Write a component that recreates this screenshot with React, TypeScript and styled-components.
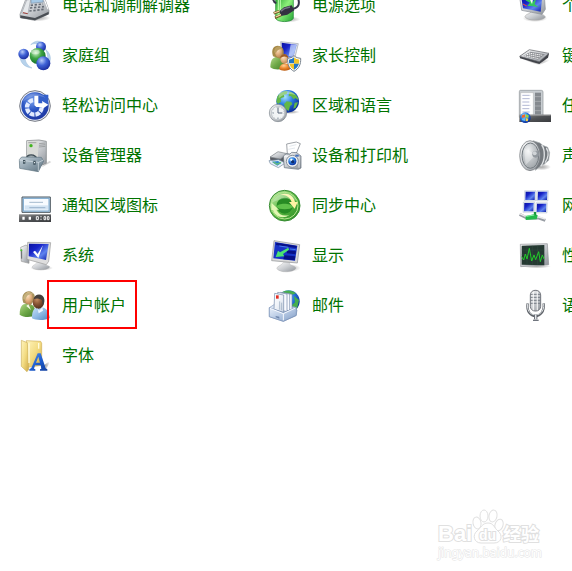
import React from "react";
import styled, { createGlobalStyle } from "styled-components";

const GlobalStyle = createGlobalStyle`
  * { box-sizing: border-box; }
  body {
    margin: 0;
    background: #fff;
    font-family: "Noto Sans CJK SC", "Noto Sans", sans-serif;
  }
`;

const Page = styled.main`
  display: flex;
  flex-direction: column;
  justify-content: space-between;
  min-height: 100vh;
  overflow: hidden;
`;

/* The list is scrolled part of a row past the top edge. */
const ItemGrid = styled.nav`
  display: grid;
  grid-template-columns: repeat(3, 250px);
  grid-auto-rows: 50px;
  margin-top: -19px;
`;

const Item = styled.a`
  display: flex;
  align-items: center;
  gap: 11px;
  padding-left: 19px;
  color: #007300;
  font-size: 16px;
  line-height: 24px;
  text-decoration: none;
  white-space: nowrap;
`;

const Icon = styled.svg`
  flex: none;
  width: 32px;
  height: 32px;
  overflow: visible;
`;

const Label = styled.span<{ $marked?: boolean }>`
  position: relative;
  padding-bottom: 4px;
  ${(p) =>
    p.$marked &&
    `&::after {
      content: "";
      position: absolute;
      inset: -12px -11px -9px -15px;
      border: 2px solid #ff0000;
    }`}
`;

const Watermark = styled.footer`
  display: flex;
  flex-direction: column;
  align-self: flex-end;
  width: 106px;
  margin: 0 30px 10px 0;
`;

const WatermarkLogo = styled.svg`
  display: block;
  width: 106px;
  height: 36px;
`;

const WatermarkAddress = styled.span`
  padding-left: 2px;
  color: #fff;
  font-family: "Noto Sans", sans-serif;
  font-size: 12px;
  line-height: 16px;
  -webkit-text-stroke: 1px #e4e4e4;
  paint-order: stroke fill;
`;

const Gradients = styled.svg`
  position: absolute;
  width: 0;
  height: 0;
`;

const ramps: Record<string, string[]> = {
  screen: ["#0a12a0", "#1723c8", "#5f84ee", "#0b18a8"],
  silver: ["#fafafa", "#c9ccd0", "#8d9298"],
  steel: ["#c5d2da", "#8fa1ad", "#5d717e"],
  dark: ["#8a8a8a", "#515356", "#393b3e"],
  green: ["#d5f5bb", "#58b63f", "#288a25"],
  battery: ["#1f9a2c", "#8df07a", "#22a334"],
  gold: ["#fff4bd", "#f3dc83", "#cfa945"],
  shirtGreen: ["#b5d98a", "#6fa948", "#3f7a2a"],
  shirtBlue: ["#c8e0f6", "#8db8e4", "#4d81bd"],
  paper: ["#ffffff", "#eef2f8", "#cfd8e6"],
  tray: ["#eaf1fb", "#b5c8e3", "#7f9bc4"],
  letter: ["#5a9bf0", "#1f5fd0", "#123f9e"],
};

const balls: Record<string, string[]> = {
  ballBlue: ["#b9cdfa", "#3f62d6", "#1c2fa0"],
  ballGreen: ["#d3f5cc", "#3ea444", "#14702a"],
  globe: ["#a6e4ff", "#2a7ce0", "#0b2f9c"],
  disc: ["#7aa2ee", "#2c56c4", "#1f3aa5"],
  skinLight: ["#fbe3c4", "#e8b98a", "#c08a58"],
  skinDark: ["#c48d62", "#8a5737", "#55301c"],
  orange: ["#ffd29a", "#ee8c33", "#bd5c10"],
  cone: ["#f4f5f6", "#c6cacd", "#a5aaae"],
  shade: ["rgba(60,60,60,.45)", "rgba(60,60,60,.25)", "rgba(60,60,60,0)"],
};

function Definitions() {
  const stops = (colors: string[]) =>
    colors.map((c, i) => (
      <stop key={i} offset={i / (colors.length - 1)} stopColor={c} />
    ));
  return (
    <Gradients aria-hidden="true">
      <defs>
        {Object.entries(ramps).map(([id, c]) => (
          <linearGradient key={id} id={id} x1="0" y1="0" x2="1" y2="1">
            {stops(c)}
          </linearGradient>
        ))}
        {Object.entries(balls).map(([id, c]) => (
          <radialGradient key={id} id={id} cx={id === "shade" ? ".5" : ".38"} cy={id === "shade" ? ".5" : ".3"} r={id === "shade" ? ".5" : ".7"}>
            {stops(c)}
          </radialGradient>
        ))}
      </defs>
    </Gradients>
  );
}

const phone = (
  <>
    <ellipse cx="56" cy="84" rx="38" ry="10" fill="url(#shade)" />
    <path d="M3 73 21 26 76 22 90 62 89 72 48 91 4 83Z" fill="url(#silver)" stroke="#85898f" strokeWidth="2" />
    <path d="M4 76 48 84 89 65 89 73 48 91 4 84Z" fill="#494d53" />
    <path d="M8 69 23 30 35 28 27 71Z" fill="#e5e8eb" stroke="#989da4" strokeWidth="2" />
    <path d="M36 24 70 20 73 36 36 40Z" fill="#a5c9e6" stroke="#7b91a8" strokeWidth="2" />
    <path d="M35 46 72 42 M33 54 75 50 M31 63 77 58" stroke="#676d76" strokeWidth="5" strokeDasharray="7 5" />
    <path d="M12 68 26 71" stroke="#a23b34" strokeWidth="3" />
    <path d="M76 28 87 58" stroke="#fff" strokeWidth="3" />
  </>
);

const power = (
  <>
    <ellipse cx="58" cy="88" rx="36" ry="9" fill="url(#shade)" />
    <path d="M20 16H73V85C68 98 24 98 20 85Z" fill="url(#battery)" stroke="#16852a" strokeWidth="2" />
    <path d="M28 25V83M34 25V65" stroke="#c0ffaf" strokeWidth="3" />
    <path d="M12 26C14 38 18 38 22 39M86 22C96 47 84 56 66 57" fill="none" stroke="#36344b" strokeWidth="6" />
    <path d="M68 46 45 52 31 64 36 78 55 74 76 61Z" fill="#333041" />
    <path d="M63 51 46 56 36 64" fill="none" stroke="#777586" strokeWidth="4" />
    <path d="M31 64 14 70M36 75 18 83" stroke="#765627" strokeWidth="8" />
    <path d="M31 63 15 69M36 74 20 81" stroke="#f4dda1" strokeWidth="4" />
  </>
);

const personalize = (
  <>
    <ellipse cx="48" cy="85" rx="37" ry="11" fill="url(#shade)" />
    <path d="M18 80C21 70 34 74 38 62H62C59 75 75 71 79 81C75 93 23 94 18 80Z" fill="url(#silver)" stroke="#aaa" strokeWidth="2" />
    <path d="M2 22 76 18 79 58 69 73 8 61Z" fill="url(#silver)" stroke="#878d94" strokeWidth="2" />
    <path d="M7 22 70 19 65 65 12 55Z" fill="url(#screen)" />
    <path d="M19 31 32 26 40 37 52 25 47 43 58 51 38 48 25 48 33 38Z" fill="#35c65e" />
    <path d="M30 23 39 42 43 24Z" fill="#f6fff7" />
    <path d="M12 42 23 48" stroke="#d44652" strokeWidth="4" />
  </>
);

const homegroup = (
  <>
    <path d="M35 14C51-3 73 1 78 22C66 10 48 8 35 14ZM3 48C3 68 16 82 39 84C22 75 19 63 17 50ZM78 26C99 43 99 65 82 79C88 57 88 43 78 26Z" fill="#b7d2eb" stroke="#79a5cf" strokeWidth="1" />
    <circle cx="66" cy="20" r="15" fill="url(#ballBlue)" />
    <circle cx="14" cy="42" r="16" fill="url(#ballBlue)" />
    <circle cx="56" cy="48" r="24" fill="url(#ballGreen)" />
    <circle cx="73" cy="70" r="21" fill="url(#ballBlue)" />
    <ellipse cx="49" cy="36" rx="13" ry="7" fill="#fff" opacity=".4" />
  </>
);

const parental = (
  <>
    <path d="M35 5 88 11 76 60 38 52Z" fill="#e1e5eb" stroke="#9fa5af" strokeWidth="2" />
    <path d="M38 8 83 14 72 55 40 47Z" fill="url(#screen)" />
    <path d="M65 13 82 15 73 52 59 48Z" fill="#dce8ff" opacity=".65" />
    <path d="M4 82C4 57 13 50 28 50S47 61 47 82C38 91 15 91 4 82Z" fill="url(#shirtGreen)" />
    <path d="M12 49C3 22 21 12 36 20C51 29 42 53 37 58Z" fill="#a68a48" />
    <ellipse cx="29" cy="36" rx="11" ry="16" fill="url(#skinLight)" />
    <path d="M15 37C17 18 32 17 40 26C30 28 25 29 21 39Z" fill="#ba9e60" />
    <path d="M31 87C31 67 63 65 66 84C62 94 35 94 31 87Z" fill="url(#orange)" />
    <ellipse cx="46" cy="57" rx="12" ry="14" fill="url(#skinLight)" />
    <path d="M33 56C35 38 56 37 59 56C51 47 41 47 33 56Z" fill="#9e5c25" />
    <path d="M75 47C69 53 63 54 56 55C55 75 61 86 75 94C90 86 96 73 95 55C88 54 81 53 75 47Z" fill="#fff" stroke="#77828c" strokeWidth="3" />
    <path d="M75 52C70 57 66 58 60 59V70H75Z" fill="#2477c4" />
    <path d="M75 52C80 57 85 58 91 59L90 71H75Z" fill="#f2c529" />
    <path d="M61 71H75V89C67 84 63 79 61 71Z" fill="#f2c529" />
    <path d="M75 71H90C87 79 83 84 75 89Z" fill="#2477c4" />
  </>
);

const keyboard = (
  <>
    <path d="M8 57 61 76 95 60 90 53Z" fill="url(#shade)" />
    <path d="M2 49 31 30 90 41 87 53 61 72 3 55Z" fill="#414349" />
    <path d="M2 49 31 29 90 40 61 65Z" fill="url(#silver)" stroke="#65666b" strokeWidth="2" />
    <path d="M13 48 34 35 78 43 57 59Z" fill="#8a8c91" />
    <path d="M17 47 59 56M23 43 65 51M29 39 71 46" stroke="#fff" strokeWidth="3" strokeDasharray="4 2" />
  </>
);

const access = (
  <>
    <circle cx="48" cy="48" r="46" fill="#e9edf5" stroke="#777b85" strokeWidth="3" />
    <circle cx="48" cy="48" r="41" fill="url(#disc)" />
    <circle cx="46" cy="52" r="22" fill="none" stroke="#e2ebff" strokeWidth="13" strokeDasharray="14 3" />
    <path d="M46 14H88V46L66 52H46Z" fill="#335fc9" />
    <path d="M46 17H58V40H70L69 33L88 44 70 57V51H52L46 46Z" fill="#fff" />
    <path d="M12 35C18 7 61 0 80 24C55 13 34 18 12 35Z" fill="#fff" opacity=".2" />
  </>
);

const clockFace = (
  <>
    <circle cx="27" cy="69" r="26" fill="url(#silver)" stroke="#7a838b" strokeWidth="2" />
    <circle cx="27" cy="69" r="20" fill="#f1f4f5" stroke="#b2babf" strokeWidth="2" />
    <path d="M27 52V69H40M27 83V86M11 69H14" fill="none" stroke="#566579" strokeWidth="3" />
    <circle cx="27" cy="69" r="17" fill="none" stroke="#7b8790" strokeWidth="2" strokeDasharray="1 8" />
  </>
);

const region = (
  <>
    <ellipse cx="65" cy="66" rx="27" ry="6" fill="url(#shade)" />
    <circle cx="56" cy="34" r="34" fill="url(#globe)" />
    <path d="M25 20C34 5 47 4 56 3L53 12 44 14 46 21 35 25 36 35 27 42 22 35ZM61 5C78 9 87 19 89 31L79 24 74 28 66 18 59 19ZM53 34 67 36 70 43 63 48 59 63 49 56 45 43ZM77 38 87 37 80 53 73 56Z" fill="#63b747" />
    <path d="M30 10C49-2 69 2 80 16C60 9 44 11 29 25Z" fill="#fff" opacity=".35" />
    {clockFace}
  </>
);

const taskbar = (
  <>
    <path d="M4 1H67Q72 1 72 6V82H1V5Q1 1 4 1Z" fill="#c9ced2" stroke="#8d9296" strokeWidth="2" />
    <path d="M5 8H43V75H5Z" fill="#fff" stroke="#999" strokeWidth="1" />
    <path d="M10 16H35M10 26H34M10 36H31M10 46H35M10 56H31M10 66H34" stroke="#b3b8d4" strokeWidth="3" strokeDasharray="22 2" />
    <path d="M48 8H66V73H48Z" fill="#858a8f" />
    <path d="M48 20H66M48 34H66M48 48H66M48 62H66" stroke="#b6babd" strokeWidth="2" />
    <path d="M1 74H96V96H1Z" fill="url(#dark)" />
    <path d="M2 76H95" stroke="#a8a8a8" strokeWidth="2" />
    <circle cx="19" cy="83" r="16" fill="url(#globe)" />
    <path d="M9 76 18 73V82L8 84Z" fill="#f1672c" />
    <path d="M20 73 29 76 28 84 20 82Z" fill="#9bd63e" />
    <path d="M8 86 18 84V93L10 91Z" fill="#63bbf4" />
    <path d="M20 84 28 86 26 94 20 93Z" fill="#ffd33f" />
  </>
);

const deviceManager = (
  <>
    <path d="M70 79 91 63 97 66 70 81Z" fill="#aaa" opacity=".5" />
    <path d="M23 2 60 0 82 4V70L60 79 23 64Z" fill="url(#silver)" stroke="#777b7d" strokeWidth="2" />
    <path d="M25 4 57 3V70L25 62Z" fill="#d9dbd7" />
    <path d="M28 8H52M60 11 79 9M60 16 79 14M60 21 79 19" stroke="#898c8d" strokeWidth="2" />
    <circle cx="36" cy="17" r="5" fill="#43b420" />
    <path d="M23 56C25 42 48 42 53 57" fill="none" stroke="#404e56" strokeWidth="6" />
    <path d="M24 56C28 45 45 45 51 57" fill="none" stroke="#b9c8cf" strokeWidth="2" />
    <path d="M1 59 8 51 67 52 74 63 58 95 2 85Z" fill="url(#steel)" stroke="#5f7480" strokeWidth="2" />
    <path d="M1 60 59 67 73 60M58 67V93" fill="none" stroke="#dce6eb" strokeWidth="2" />
    <path d="M12 60H19V71H12ZM43 62H50V74H43Z" fill="#3f515c" />
    <path d="M14 63H17V67H14ZM45 66H48V70H45Z" fill="#e1e9ec" />
  </>
);

const printer = (
  <>
    <path d="M53 12 82 6 94 11 80 45 55 41Z" fill="#fff" stroke="#70767d" strokeWidth="2" />
    <path d="M61 19 82 14M58 28 78 24" stroke="#d5dce4" strokeWidth="2" />
    <path d="M3 52 27 36 55 42 64 59 42 73 4 61Z" fill="#595d64" />
    <path d="M3 51 27 35 55 41 34 57Z" fill="url(#silver)" stroke="#84898e" strokeWidth="2" />
    <path d="M0 62 29 59 49 69 28 83 4 71Z" fill="#e8eff8" stroke="#71889f" strokeWidth="2" />
    <path d="M8 65 27 63 37 69 25 77Z" fill="#3289cf" />
    <path d="M13 66 24 73 36 67" fill="none" stroke="#69bf76" strokeWidth="4" />
    <path d="M43 48 51 42 62 43 68 37 84 38 89 43 96 48V84L88 88 46 83Z" fill="url(#silver)" stroke="#5e6b78" strokeWidth="2" />
    <path d="M47 49 90 51V83" fill="none" stroke="#f9fbff" strokeWidth="2" />
    <circle cx="70" cy="64" r="18" fill="#edf1f4" stroke="#8b939b" strokeWidth="3" />
    <circle cx="70" cy="64" r="12" fill="url(#globe)" />
    <circle cx="71" cy="65" r="5" fill="#102d6c" />
    <circle cx="67" cy="59" r="3" fill="#fff" />
    <path d="M79 44H89V50H79Z" fill="#426eb9" />
  </>
);

const sound = (
  <>
    <ellipse cx="67" cy="81" rx="29" ry="10" fill="url(#shade)" />
    <path d="M42 2 63 9 71 16 86 22 92 38 89 61 76 72 66 77 49 91Z" fill="#74797e" stroke="#a8adb1" strokeWidth="2" />
    <path d="M68 15C79 29 79 62 65 79M82 24C91 36 88 55 78 68" fill="none" stroke="#dfe2e4" strokeWidth="4" />
    <ellipse cx="33" cy="47" rx="31" ry="45" fill="url(#silver)" stroke="#6c7175" strokeWidth="2" />
    <ellipse cx="34" cy="47" rx="25" ry="38" fill="url(#cone)" stroke="#747b80" strokeWidth="3" />
    <path d="M15 24 51 44 20 75Z" fill="#fff" opacity=".35" />
    <circle cx="50" cy="43" r="10" fill="#92989e" />
    <circle cx="47" cy="40" r="6" fill="#d0d4d7" />
  </>
);

const notification = (
  <>
    <path d="M9 21H94V67H9Z" fill="#c1d7e8" stroke="#4d5860" strokeWidth="3" />
    <path d="M13 25H90V63H13Z" fill="#f7fbff" stroke="#75a4cc" strokeWidth="3" />
    <path d="M17 46H87V59H17Z" fill="#d4e4f3" />
    <path d="M31 37H72M31 53H79" stroke="#7b9bb7" strokeWidth="2" />
    <path d="M0 73H96V96H0Z" fill="url(#dark)" />
    <path d="M0 74H96" stroke="#aaa" strokeWidth="2" />
    <path d="M10 80H17V89H10ZM29 80H36V89H29Z" fill="#fff" />
    <path d="M52 80H58V89H52ZM75 80H80V89H75ZM85 80H90V89H85Z" fill="none" stroke="#f5f5f5" strokeWidth="3" />
    <path d="M66 79V82M66 86V89" stroke="#fff" strokeWidth="4" />
  </>
);

const sync = (
  <>
    <circle cx="47" cy="47" r="46" fill="url(#green)" stroke="#388c34" strokeWidth="3" />
    <circle cx="47" cy="47" r="40" fill="none" stroke="#b5e68f" strokeWidth="3" />
    <circle cx="47" cy="47" r="24" fill="#278b24" />
    <path d="M22 50C26 38 66 38 72 50C66 60 28 60 22 50Z" fill="#5ec04a" />
    <path d="M34 14C56 6 74 18 78 36H86L77 56 60 36H68C64 22 52 14 34 14Z" fill="#fff3a4" />
    <path d="M8 39 30 59H22C31 76 46 80 62 74C44 88 18 82 12 60H7Z" fill="#e3f7b4" />
    <path d="M10 37C24 2 71 3 84 34C58 20 40 24 10 37Z" fill="#fff" opacity=".25" />
  </>
);

const network = (
  <>
    {[
      [17, 2],
      [54, 2],
      [13, 36],
      [51, 38],
    ].map(([x, y]) => (
      <g key={`${x}-${y}`}>
        <path d={`M${x} ${y}h34l-1 31h-34z`} fill="#dfe7f1" stroke="#a0adc0" strokeWidth="1" />
        <path d={`M${x + 3} ${y + 3}h28l-1 25h-28z`} fill="url(#screen)" />
      </g>
    ))}
    <path d="M2 73 24 84 60 84 79 91" fill="none" stroke="#989da4" strokeWidth="9" />
    <path d="M2 71 24 81 60 81 79 87" fill="none" stroke="#eee" strokeWidth="4" />
    <path d="M20 78 48 72 56 76 53 88 20 90Z" fill="#22b94b" />
    <path d="M48 66V76" stroke="#15973b" strokeWidth="7" />
    <path d="M22 79 46 75" stroke="#88f7a5" strokeWidth="3" />
  </>
);

const system = (
  <>
    <path d="M5 22 21 15 30 21V70L7 64Z" fill="url(#silver)" stroke="#999" strokeWidth="2" />
    <path d="M8 29V56" stroke="#5f6468" strokeWidth="3" />
    <circle cx="7" cy="31" r="3" fill="#4bc62c" />
    <ellipse cx="68" cy="84" rx="34" ry="8" fill="url(#shade)" />
    <path d="M39 82C40 74 52 75 55 65H75C74 78 90 74 92 81C86 92 46 93 39 82Z" fill="url(#silver)" stroke="#aaa" strokeWidth="1" />
    <path d="M26 7 95 8 89 64 82 74 24 58Z" fill="#dedede" stroke="#989898" strokeWidth="2" />
    <path d="M30 11 89 12 81 60 29 49Z" fill="url(#screen)" />
    <path d="M42 36 48 32 56 42 72 16 58 54Z" fill="#fff" />
  </>
);

const display = (
  <>
    <ellipse cx="57" cy="84" rx="38" ry="12" fill="url(#shade)" />
    <path d="M24 86C25 76 39 77 43 67H62C60 79 75 75 81 84C75 99 31 99 24 86Z" fill="url(#silver)" stroke="#aaa" strokeWidth="1" />
    <path d="M15 2 92 14 85 69 8 62Z" fill="#d9d9d9" stroke="#8f9296" strokeWidth="2" />
    <path d="M18 6 85 17 78 62 13 55Z" fill="#1733c6" />
    <path d="M22 8 83 18 82 24 21 15ZM53 31 81 34 79 43 54 40ZM46 46 79 49 77 61 43 58Z" fill="#071087" />
    <path d="M31 18 58 22M63 27 80 29" stroke="#477fec" strokeWidth="3" />
    <path d="M58 23 60 29 42 42 46 49 20 51 27 32 33 37Z" fill="#4ae471" />
  </>
);

const performance = (
  <>
    <ellipse cx="53" cy="79" rx="43" ry="6" fill="url(#shade)" />
    <path d="M4 13 85 11 89 74 5 80Z" fill="url(#silver)" stroke="#919397" strokeWidth="2" />
    <path d="M8 17 76 15V76L8 74Z" fill="#253932" />
    <path d="M8 30H76M8 44H76M8 58H76M24 17V74M40 17V74M56 17V74" stroke="#3b5548" strokeWidth="1" />
    <path d="M8 50 14 60 19 42 24 57 31 25 38 63 45 45 50 59 59 35 64 65 70 45 75 57" fill="none" stroke="#22cc2a" strokeWidth="3" />
  </>
);

const users = (
  <>
    <path d="M2 74C2 46 12 39 30 42S49 56 48 75C38 83 14 83 2 74Z" fill="url(#shirtGreen)" />
    <path d="M13 38C2 10 27-3 41 8C57 19 39 40 34 47Z" fill="#a8935c" />
    <ellipse cx="29" cy="24" rx="12" ry="18" fill="url(#skinLight)" />
    <path d="M13 27C11 7 34 3 43 12C29 13 21 16 20 30Z" fill="#c4b07c" />
    <path d="M28 43 36 60 22 48Z" fill="#f7fae8" />
    <path d="M39 85C38 55 51 51 66 52S90 63 92 84C79 92 51 92 39 85Z" fill="url(#shirtBlue)" />
    <ellipse cx="58" cy="36" rx="17" ry="20" fill="url(#skinDark)" />
    <path d="M44 28C46 9 74 9 76 28C77 36 75 42 71 46L69 30C60 26 52 24 44 28Z" fill="#45403d" />
    <path d="M55 53 60 62 70 52 72 62 59 70Z" fill="#edf6ff" />
  </>
);

const mail = (
  <>
    <circle cx="59" cy="34" r="33" fill="url(#globe)" />
    <path d="M28 16C42-3 69-2 81 10L68 15 57 11 46 22ZM75 18 90 30 84 57 72 62 65 49 78 37Z" fill="#46ae4e" />
    <path d="M1 53 18 42 78 51 84 61 81 77 43 94 1 80Z" fill="url(#tray)" stroke="#8298bb" strokeWidth="2" />
    <path d="M42 8 69 13V61L42 56Z" fill="#f8faff" stroke="#7187a8" strokeWidth="2" />
    <path d="M34 7 62 12V63L34 57Z" fill="#f8faff" stroke="#7187a8" strokeWidth="2" />
    <path d="M26 7 54 12V65L26 58Z" fill="#f8faff" stroke="#7187a8" strokeWidth="2" />
    <path d="M17 10 44 15V67L15 58Z" fill="url(#paper)" stroke="#7187a8" strokeWidth="2" />
    <path d="M21 16H29V26H21Z" fill="#e32c21" />
    <path d="M32 34V59M38 38V61" stroke="#8ea1ba" strokeWidth="2" />
    <path d="M1 53 43 68 82 52V76L43 94 1 80Z" fill="url(#tray)" stroke="#7990b5" strokeWidth="2" />
    <path d="M3 55 43 71 79 54M43 71V91" fill="none" stroke="#f7faff" strokeWidth="3" />
    <path d="M20 78 31 80V86L20 82Z" fill="#6e86ad" />
  </>
);

const microphone = (
  <>
    <path d="M26 40C18 91 80 91 74 40" fill="none" stroke="#60646a" strokeWidth="7" />
    <path d="M26 41C19 86 79 86 74 41" fill="none" stroke="#dce0e3" strokeWidth="3" />
    <rect x="34" y="1" width="31" height="62" rx="14" fill="url(#silver)" stroke="#74777e" strokeWidth="3" />
    <path d="M36 13H63M34 22H65M34 31H65M34 40H65" stroke="#777d86" strokeWidth="3" />
    <path d="M43 6V61M55 5V61" stroke="#fff" strokeWidth="4" opacity=".75" />
    <path d="M50 74V88" stroke="#545961" strokeWidth="10" />
    <path d="M50 74V89" stroke="#e4e7ea" strokeWidth="5" />
    <path d="M42 91H59" stroke="#70757e" strokeWidth="4" />
  </>
);

const fonts = (
  <>
    <path d="M62 85 95 61 80 91Z" fill="url(#shade)" />
    <path d="M22 2 65 4 68 10V76L25 82Z" fill="url(#gold)" stroke="#d0af56" strokeWidth="2" />
    <path d="M7 1 25 8 29 88 24 95 7 79Z" fill="url(#gold)" stroke="#cbb05e" strokeWidth="2" />
    <path d="M30 10V69M59 9V26" stroke="#fffbdc" strokeWidth="4" />
    <path d="M31 92H49V88L45 86 48 76H65L67 86 63 88V92H85V88L80 85 65 40H56L37 84 31 88ZM51 68 58 50 63 68Z" fill="url(#letter)" fillRule="evenodd" />
  </>
);

interface Entry {
  label: string;
  art: React.ReactNode;
  marked?: boolean;
}

const entries: Entry[] = [
  { label: "电话和调制解调器", art: phone },
  { label: "电源选项", art: power },
  { label: "个", art: personalize },
  { label: "家庭组", art: homegroup },
  { label: "家长控制", art: parental },
  { label: "键", art: keyboard },
  { label: "轻松访问中心", art: access },
  { label: "区域和语言", art: region },
  { label: "任", art: taskbar },
  { label: "设备管理器", art: deviceManager },
  { label: "设备和打印机", art: printer },
  { label: "声", art: sound },
  { label: "通知区域图标", art: notification },
  { label: "同步中心", art: sync },
  { label: "网", art: network },
  { label: "系统", art: system },
  { label: "显示", art: display },
  { label: "性", art: performance },
  { label: "用户帐户", art: users, marked: true },
  { label: "邮件", art: mail },
  { label: "语", art: microphone },
  { label: "字体", art: fonts },
];

function BaiduWatermark() {
  return (
    <Watermark>
      <WatermarkLogo viewBox="0 0 106 36">
        <g fill="#fff" stroke="#e0e0e0" strokeWidth="1">
          <ellipse cx="41" cy="14" rx="4" ry="6" transform="rotate(-12 41 14)" />
          <ellipse cx="48" cy="7" rx="4" ry="6" />
          <ellipse cx="57" cy="7" rx="4" ry="6" transform="rotate(12 57 7)" />
          <ellipse cx="63" cy="16" rx="4" ry="6" transform="rotate(18 63 16)" />
          <path d="M52 14C46 14 45 19 41 22C36 26 38 34 45 34H58C66 34 67 26 62 22C58 19 58 14 52 14Z" />
        </g>
        <g fill="#fff" stroke="#e0e0e0" strokeWidth="2" paintOrder="stroke" fontWeight="700">
          <text x="2" y="32" fontFamily="Liberation Sans, sans-serif" fontSize="22">Bai</text>
          <text x="43" y="31" fontFamily="Liberation Sans, sans-serif" fontSize="14">du</text>
          <text x="67" y="32" fontFamily="Noto Sans CJK SC, sans-serif" fontSize="18">经验</text>
        </g>
      </WatermarkLogo>
      <WatermarkAddress>jingyan.baidu.com</WatermarkAddress>
    </Watermark>
  );
}

export default function App() {
  return (
    <>
      <GlobalStyle />
      <Definitions />
      <Page>
        <ItemGrid>
          {entries.map(({ label, art, marked }) => (
            <Item key={label} href="#">
              <Icon viewBox="0 0 96 96" aria-hidden="true">
                {art}
              </Icon>
              <Label $marked={marked}>{label}</Label>
            </Item>
          ))}
        </ItemGrid>
        <BaiduWatermark />
      </Page>
    </>
  );
}
